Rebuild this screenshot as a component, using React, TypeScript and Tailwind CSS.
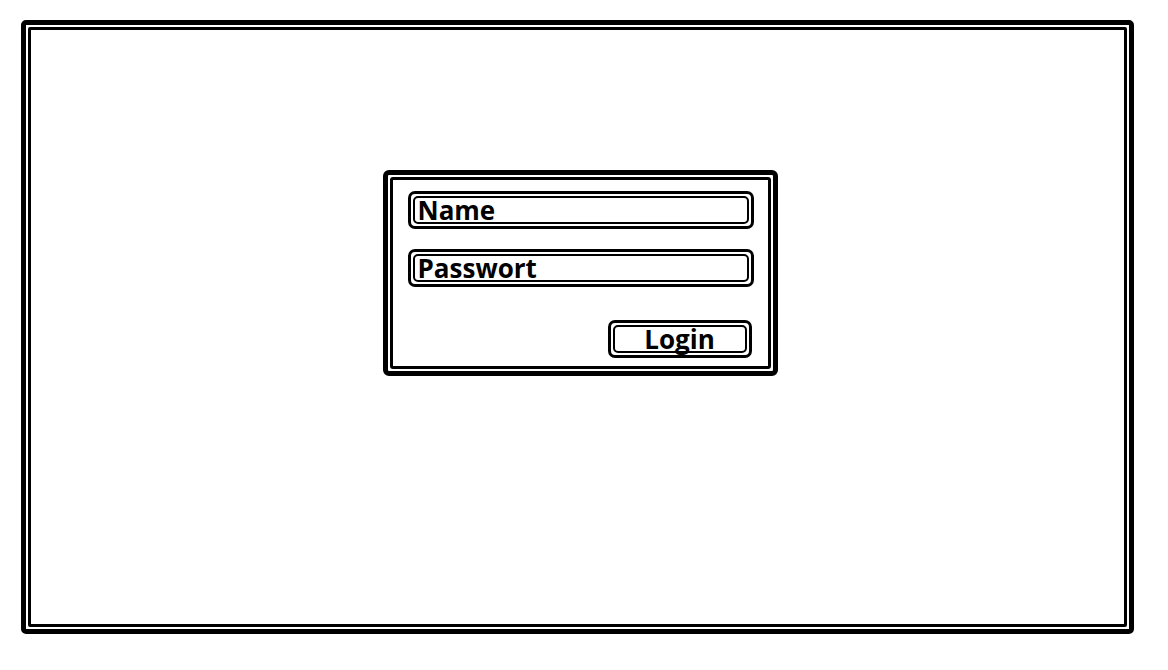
const Field = ({ label }: { label: string }) => (
  <div className="w-[346px] rounded-[7px] border-[3px] border-black p-[2px]">
    <div className="flex h-[28px] items-center rounded-[5px] border-2 border-black pl-[3px]">
      <span className="text-[26px] font-bold leading-[24px] text-black">{label}</span>
    </div>
  </div>
);

const App = () => {
  return (
    <div
      className="h-[670px] w-[1168px] bg-white pl-[21px] pt-[20px]"
      style={{ fontFamily: '"Open Sans", "Noto Sans", sans-serif' }}
    >
      {/* outer double frame */}
      <div className="h-[614px] w-[1113px] rounded-[5px] border-[5px] border-black p-[2px]">
        <div className="flex h-full w-full justify-center rounded-[2px] border-[3px] border-black pl-[5px] pt-[140px]">
          {/* login box */}
          <div className="h-[206px] w-[395px] rounded-[6px] border-[5px] border-black p-[2px]">
            <div className="flex h-full flex-col rounded-[3px] border-[3px] border-black pl-[15px] pt-[11px]">
              <Field label="Name" />
              <div className="mt-[20px]">
                <Field label="Passwort" />
              </div>
              <div className="mt-[33px] flex w-[346px] justify-end pr-[2px]">
                <button className="w-[144px] rounded-[7px] border-[3px] border-black p-[2px]">
                  <div className="flex h-[28px] items-center justify-center rounded-[5px] border-2 border-black">
                    <span className="text-[26px] font-bold leading-[24px] text-black">Login</span>
                  </div>
                </button>
              </div>
            </div>
          </div>
        </div>
      </div>
    </div>
  );
};

export default App;
